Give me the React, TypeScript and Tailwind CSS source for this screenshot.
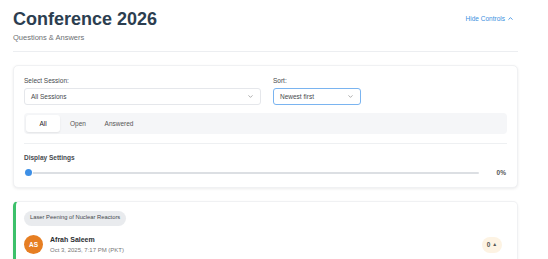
import { ChevronDown, ChevronUp } from 'lucide-react';

export default function App() {
  return (
    <div className="min-h-screen bg-white font-['Liberation_Sans',Arial,sans-serif] text-[#2c3e50]">
      <div className="ml-[13px] w-[505px]">
        {/* Header */}
        <div className="flex items-start justify-between pt-[8px] pb-[8px] border-b border-[#eceef1]">
          <div>
            <h1 className="text-[18px] font-bold leading-[22px] text-[#2c3e50]">Conference 2026</h1>
            <p className="mt-[3px] text-[7.5px] leading-[10px] text-[#6c6f73]">Questions &amp; Answers</p>
          </div>
          <button className="mt-[6px] mr-[4px] flex items-center gap-[2px] text-[6.5px] font-medium text-[#3b8fe0]">
            Hide Controls
            <ChevronUp className="h-[7px] w-[7px]" strokeWidth={3} />
          </button>
        </div>

        {/* Controls card */}
        <div className="mt-[13px] rounded-[5px] border border-[#f0f1f3] bg-white px-[10px] pt-[10px] pb-[9px] shadow-[0_1px_3px_rgba(0,0,0,0.08)]">
          <div className="flex gap-[12px]">
            <div>
              <label className="block text-[6.5px] font-medium leading-[10px] text-[#45494e]">Select Session:</label>
              <div className="mt-[2px] flex h-[17px] w-[237px] items-center justify-between rounded-[3px] border border-[#e5e7eb] bg-white px-[6px]">
                <span className="text-[6.5px] text-[#45494e]">All Sessions</span>
                <ChevronDown className="h-[7px] w-[7px] text-[#777]" strokeWidth={2} />
              </div>
            </div>
            <div>
              <label className="block text-[6.5px] font-medium leading-[10px] text-[#45494e]">Sort:</label>
              <div className="mt-[2px] flex h-[17px] w-[88px] items-center justify-between rounded-[3px] border border-[#7ab4f0] bg-white px-[6px]">
                <span className="text-[6.5px] text-[#45494e]">Newest first</span>
                <ChevronDown className="h-[7px] w-[7px] text-[#777]" strokeWidth={2} />
              </div>
            </div>
          </div>

          {/* Tabs */}
          <div className="mt-[8px] flex h-[21px] items-center gap-[2px] rounded-[4px] bg-[#f5f6f8] px-[2px]">
            <div className="flex h-[17px] w-[34px] items-center justify-center rounded-[3px] bg-white text-[6.5px] font-medium text-[#222] shadow-[0_1px_2px_rgba(0,0,0,0.08)]">
              All
            </div>
            <div className="flex h-[17px] w-[32px] items-center justify-center text-[6.5px] text-[#555]">Open</div>
            <div className="flex h-[17px] w-[46px] items-center justify-center text-[6.5px] text-[#555]">Answered</div>
          </div>

          <div className="mt-[9px] border-t border-[#eef0f2]" />

          {/* Display settings */}
          <div className="mt-[9px] text-[6.5px] font-semibold leading-[10px] text-[#45494e]">Display Settings</div>
          <div className="mt-[5px] flex items-center">
            <div className="relative flex h-[8px] w-[455px] items-center">
              <div className="h-[2px] w-full rounded-full bg-[#dcdfe3]" />
              <div className="absolute left-[1px] h-[7px] w-[7px] rounded-full bg-[#3d8fe6] shadow-[0_0_0_1px_rgba(255,255,255,0.9)]" />
            </div>
            <span className="ml-auto mr-[1px] text-[6.5px] font-semibold text-[#555]">0%</span>
          </div>
        </div>

        {/* Question card */}
        <div className="mt-[13px] rounded-[5px] border border-[#f0f1f3] border-l-[3px] border-l-[#3cc06a] bg-white pl-[8px] pr-[15px] pt-[9px] pb-[10px] shadow-[0_1px_3px_rgba(0,0,0,0.06)]">
          <div className="flex">
            <span className="flex h-[15px] items-center rounded-full bg-[#e9ebee] px-[6px] text-[5.8px] font-medium leading-none text-[#45494e]">
              Laser Peening of Nuclear Reactors
            </span>
          </div>
          <div className="mt-[9px] flex items-center justify-between">
            <div className="flex items-center gap-[7px]">
              <div className="flex h-[19px] w-[19px] items-center justify-center rounded-full bg-[#e67e22] text-[6.5px] font-bold leading-none text-white">
                AS
              </div>
              <div>
                <div className="text-[7px] font-semibold leading-[10px] text-[#2a2d31]">Afrah Saleem</div>
                <div className="mt-[1px] text-[6px] leading-[9px] text-[#777]">Oct 3, 2025, 7:17 PM (PKT)</div>
              </div>
            </div>
            <div className="flex h-[16px] w-[20px] items-center justify-center gap-[2px] rounded-full bg-[#fdf3e3] text-[6.5px] font-semibold leading-none text-[#555]">
              0<span className="text-[5px]">▲</span>
            </div>
          </div>
        </div>
      </div>
    </div>
  );
}
